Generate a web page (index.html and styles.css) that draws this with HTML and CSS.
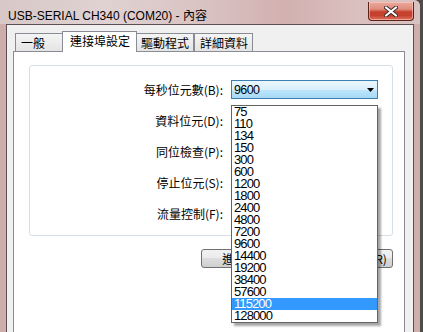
FILE: index.html
```html
<!DOCTYPE html>
<html lang="zh-Hant">
<head>
    <meta charset="UTF-8">
    <title>USB-SERIAL CH340 (COM20) - 內容</title>
    <link rel="stylesheet" href="styles.css">
</head>
<body>
    <div class="window">
        <div class="titlebar">
            <span class="title">USB-SERIAL CH340 (COM20) - 內容</span>
            <div class="close">
                <svg width="14" height="11" viewBox="0 0 14 11">
                    <path d="M2 1.5L12 9.5M12 1.5L2 9.5" stroke="#3b2a2a" stroke-width="4" stroke-linecap="round"/>
                    <path d="M2 1.5L12 9.5M12 1.5L2 9.5" stroke="#ffffff" stroke-width="2.2" stroke-linecap="round"/>
                </svg>
            </div>
        </div>

        <div class="client">
            <div class="tabs">
                <div class="tab first">一般</div>
                <div class="tab selected">連接埠設定</div>
                <div class="tab">驅動程式</div>
                <div class="tab">詳細資料</div>
            </div>

            <div class="pane">
                <div class="group">
                    <span class="label">每秒位元數(B):</span>
                    <div class="combo hot"><span>9600</span><svg width="7" height="4" viewBox="0 0 7 4"><path d="M0 0h7L3.5 4z" fill="#000"/></svg></div>
                    <span class="label">資料位元(D):</span>
                    <div class="combo"></div>
                    <span class="label">同位檢查(P):</span>
                    <div class="combo"></div>
                    <span class="label">停止位元(S):</span>
                    <div class="combo"></div>
                    <span class="label">流量控制(F):</span>
                    <div class="combo"></div>
                </div>

                <div class="buttons">
                    <button class="btn">進階(A)...</button>
                    <button class="btn">還原預設值(R)</button>
                </div>
            </div>
        </div>

        <ul class="dropdown">
            <li>75</li>
            <li>110</li>
            <li>134</li>
            <li>150</li>
            <li>300</li>
            <li>600</li>
            <li>1200</li>
            <li>1800</li>
            <li>2400</li>
            <li>4800</li>
            <li>7200</li>
            <li>9600</li>
            <li>14400</li>
            <li>19200</li>
            <li>38400</li>
            <li>57600</li>
            <li class="active">115200</li>
            <li>128000</li>
        </ul>
    </div>
</body>
</html>
```

FILE: styles.css
```css
body {
    margin: 0;
    background: #4e4b4b;
    font-family: "Noto Sans CJK TC", sans-serif;
    font-size: 12px;
    color: #000;
}

.window {
    position: relative;
    width: 420px;
    height: 332px;
    overflow: hidden;
    display: flex;
    flex-direction: column;
    background: #cdaeab;
    border-top-right-radius: 6px;
}

.titlebar {
    height: 31px;
    display: flex;
    align-items: flex-start;
    padding-left: 8px;
    background: linear-gradient(90deg, #d8c8c8 0%, #e0d2d2 25%, #d9c1c1 50%, #d2b0b0 68%, #dac0bf 85%, #d8c2c1 100%);
}

.title {
    padding-top: 9px;
    line-height: 15px;
    font-family: "Liberation Sans", "Noto Sans CJK TC", sans-serif;
    font-size: 12px;
}

.close {
    margin-left: auto;
    margin-right: 6px;
    margin-top: 2px;
    width: 44px;
    height: 18px;
    border: 1px solid #5c2119;
    border-top: none;
    border-radius: 0 0 4px 4px;
    background: linear-gradient(#e9ab9f 0%, #de8b7b 40%, #c6402c 55%, #c5412f 75%, #de7460 100%);
    box-shadow: inset 0 0 0 1px rgba(255, 210, 200, 0.55);
    display: flex;
    align-items: center;
    justify-content: center;
}

.client {
    flex: 1;
    margin: 0 6px 0 6px;
    border-top: 1px solid #5d5052;
    border-left: 1px solid #5d5052;
    border-right: 1px solid #5d5052;
    background: #f0f0f0;
    padding: 6px 8px 0 6px;
}

.tabs {
    display: flex;
    align-items: flex-end;
    height: 20px;
    padding-left: 2px;
}

.tab {
    box-sizing: border-box;
    height: 18px;
    padding: 0 4px 0 5px;
    border: 1px solid #898c95;
    border-bottom: none;
    background: linear-gradient(#f5f5f5, #e4e4e4);
    line-height: 17px;
    white-space: nowrap;
}

.tab.first {
    min-width: 49px;
}

.tab.selected {
    position: relative;
    z-index: 1;
    height: 21px;
    margin: 0 -2px -1px;
    padding: 0 6px 2px 7px;
    background: #fff;
    line-height: 18px;
}

.pane {
    height: 300px;
    border: 1px solid #898c95;
    background: #fff;
}

.group {
    display: grid;
    grid-template-columns: 193px 147px;
    column-gap: 8px;
    row-gap: 12px;
    align-items: center;
    margin: 13px 11px 0 15px;
    padding: 14px 14px 12px 0;
    border: 1px solid #d5dfe5;
    border-radius: 3px;
}

.label {
    text-align: right;
    white-space: nowrap;
}

.combo {
    box-sizing: border-box;
    height: 19px;
    display: flex;
    align-items: center;
    justify-content: space-between;
    padding: 0 3px 0 2px;
    border: 1px solid #acacac;
    background: #fff;
    font-family: "Liberation Sans", sans-serif;
    font-size: 12.5px;
    letter-spacing: -0.6px;
}

.combo.hot {
    border-color: #3c7fb1;
    background: linear-gradient(#eaf6fd 0%, #d9f0fc 50%, #bee6fd 50%, #a7d9f5 100%);
}

.buttons {
    display: flex;
    justify-content: flex-end;
    gap: 12px;
    margin: 13px 11px 0 0;
}

.btn {
    box-sizing: border-box;
    height: 19px;
    padding: 0;
    border: 1px solid #707070;
    border-radius: 3px;
    background: linear-gradient(#f2f2f2 0%, #ebebeb 50%, #dddddd 50%, #cfcfcf 100%);
    font-family: "Noto Sans CJK TC", sans-serif;
    font-size: 12px;
    line-height: 17px;
    color: #000;
}

.btn:first-child {
    width: 92px;
}

.btn:last-child {
    width: 88px;
}

.dropdown {
    position: absolute;
    left: 231px;
    top: 105px;
    width: 147px;
    margin: 0;
    padding: 0;
    list-style: none;
    box-sizing: border-box;
    border: 1px solid #646464;
    background: #fff;
    box-shadow: 3px 3px 2px rgba(0, 0, 0, 0.35);
    font-family: "Liberation Sans", sans-serif;
    font-size: 13px;
    letter-spacing: -0.9px;
}

.dropdown li {
    height: 12px;
    line-height: 12px;
    padding-left: 2px;
}

.dropdown li.active {
    background: #3399ff;
    color: #fff;
}
```
